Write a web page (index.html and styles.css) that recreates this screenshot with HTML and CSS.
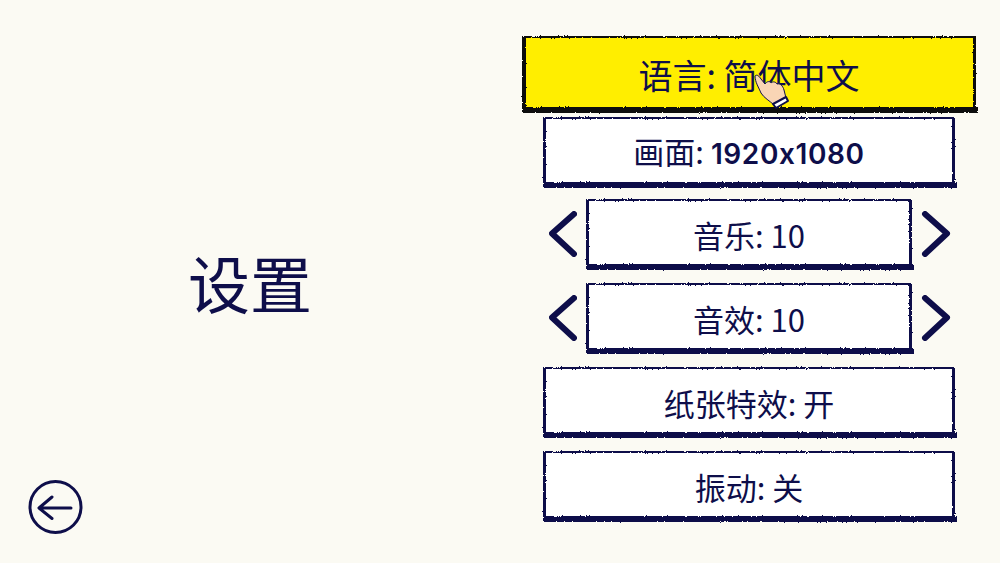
FILE: index.html
```html
<!DOCTYPE html>
<html lang="zh-CN">
<head>
  <meta charset="UTF-8">
  <title>设置</title>
  <link rel="stylesheet" href="styles.css">
</head>
<body>

  <!-- rough edge for the hand drawn frames -->
  <svg class="defs" width="0" height="0" aria-hidden="true">
    <filter id="rough" x="-2%" y="-5%" width="104%" height="110%">
      <feTurbulence type="fractalNoise" baseFrequency="0.55" numOctaves="2" seed="4"/>
      <feDisplacementMap in="SourceGraphic" scale="2.500"/>
    </filter>
  </svg>

  <div class="pagina">
    <div class="lado">
      <h1 class="titulo">设置</h1>
      <svg class="voltar" width="56" height="56" viewBox="0 0 56 56" fill="none">
        <circle cx="27.5" cy="28" r="25.5"/>
        <path d="M43 29H11.5M24 18 11 29l13 10.5"/>
      </svg>
    </div>

    <div class="menu">
      <div class="botao ativo">
        <span class="rotulo">语言: 简体中文</span>
        <svg class="mao" width="40" height="42" viewBox="0 0 40 42">
          <path class="pele" d="M5 6C7 4 9 6 11 9l4 5c2-3 5-3 6-1 2-2 5-1 6 1 3-1 6 2 7 6l2 8-12 7C20 31 14 28 11 23 9 18 5 12 5 6z"/>
          <path class="punho" d="M23 34l13-7 2 4-12 7z"/>
        </svg>
      </div>
      <div class="botao curto"><span class="rotulo">画面: <span class="num">1920x1080</span></span></div>
      <div class="linha">
        <svg class="seta" width="28" height="46" viewBox="0 0 28 46"><path d="M25 3 3 22.500l22 20.500"/></svg>
        <div class="botao"><span class="rotulo">音乐: 10</span></div>
        <svg class="seta" width="30" height="46" viewBox="0 0 30 46"><path d="M4 3l22 19.500L4 43"/></svg>
      </div>
      <div class="linha">
        <svg class="seta" width="28" height="46" viewBox="0 0 28 46"><path d="M25 3 3 22.500l22 20.500"/></svg>
        <div class="botao"><span class="rotulo">音效: 10</span></div>
        <svg class="seta" width="30" height="46" viewBox="0 0 30 46"><path d="M4 3l22 19.500L4 43"/></svg>
      </div>
      <div class="botao"><span class="rotulo">纸张特效: 开</span></div>
      <div class="botao"><span class="rotulo">振动: 关</span></div>
    </div>
  </div>

</body>
</html>
```

FILE: styles.css
```css
/* Estilos gerais */
body {
  margin: 0;
  background-color: #fbfaf3;
  color: #0e0e4a;
  font-family: "Noto Sans CJK SC", "Noto Sans", sans-serif;
  overflow: hidden;
}

.defs {
  display: block;
  height: 0;
}

.pagina {
  display: flex;
  height: 563px;
}

.lado {
  width: 522px;
  box-sizing: border-box;
  display: flex;
  flex-direction: column;
  padding: 238px 0 28px 28px;
}

.titulo {
  margin: 0;
  width: 444px;
  text-align: center;
  font-size: 62px;
  font-weight: 400;
  line-height: 88px;
}

.voltar {
  margin-top: auto;
}

.voltar circle,
.voltar path {
  stroke: #0e0e4a;
  stroke-width: 3;
  stroke-linecap: round;
  stroke-linejoin: round;
}

.menu {
  width: 454px;
  padding-top: 36px;
  display: flex;
  flex-direction: column;
  align-items: center;
  gap: 14px;
}

.botao {
  position: relative;
  width: 412px;
  height: 70px;
  display: flex;
  align-items: center;
  justify-content: center;
  font-size: 31px;
}

.botao::before {
  content: "";
  position: absolute;
  inset: 0;
  box-sizing: border-box;
  background-color: #ffffff;
  border: 2px solid #0e0e4a;
  border-left-width: 3px;
  border-right-width: 3px;
  filter: url(#rough);
}

/* traco grosso embaixo, passa um pouco da borda */
.botao::after {
  content: "";
  position: absolute;
  left: 1px;
  right: -2px;
  bottom: -1px;
  height: 6px;
  background-color: #0e0e4a;
  filter: url(#rough);
}

.rotulo {
  position: relative;
  z-index: 1;
  white-space: pre;
}

.num {
  font-family: Inter, sans-serif;
  font-weight: 600;
  font-size: 28px;
  letter-spacing: 0.6px;
}

.curto {
  margin-bottom: -2px;
}

.curto .rotulo {
  top: -2px;
}

.ativo {
  width: 454px;
  height: 76px;
  margin-bottom: -9px;
  font-size: 34px;
}

.ativo::before {
  background-color: #ffee00;
  border-color: #111111;
  border-left-width: 4px;
}

.ativo::after {
  background-color: #111111;
}

.mao {
  position: absolute;
  left: 228px;
  top: 34px;
  z-index: 2;
}

.pele {
  fill: #f9d5b5;
  stroke: #0e0e4a;
  stroke-width: 1;
  stroke-linejoin: round;
}

.punho {
  fill: #ffffff;
  stroke: #0e0e4a;
  stroke-width: 2;
  stroke-linejoin: round;
}

.linha {
  width: 412px;
  box-sizing: border-box;
  padding: 0 4px 0 6px;
  display: flex;
  align-items: center;
  gap: 9px;
}

.linha .botao {
  width: 326px;
}

.seta {
  flex: none;
}

.seta path {
  fill: none;
  stroke: #0e0e4a;
  stroke-width: 6;
  stroke-linecap: round;
  stroke-linejoin: round;
}
```
